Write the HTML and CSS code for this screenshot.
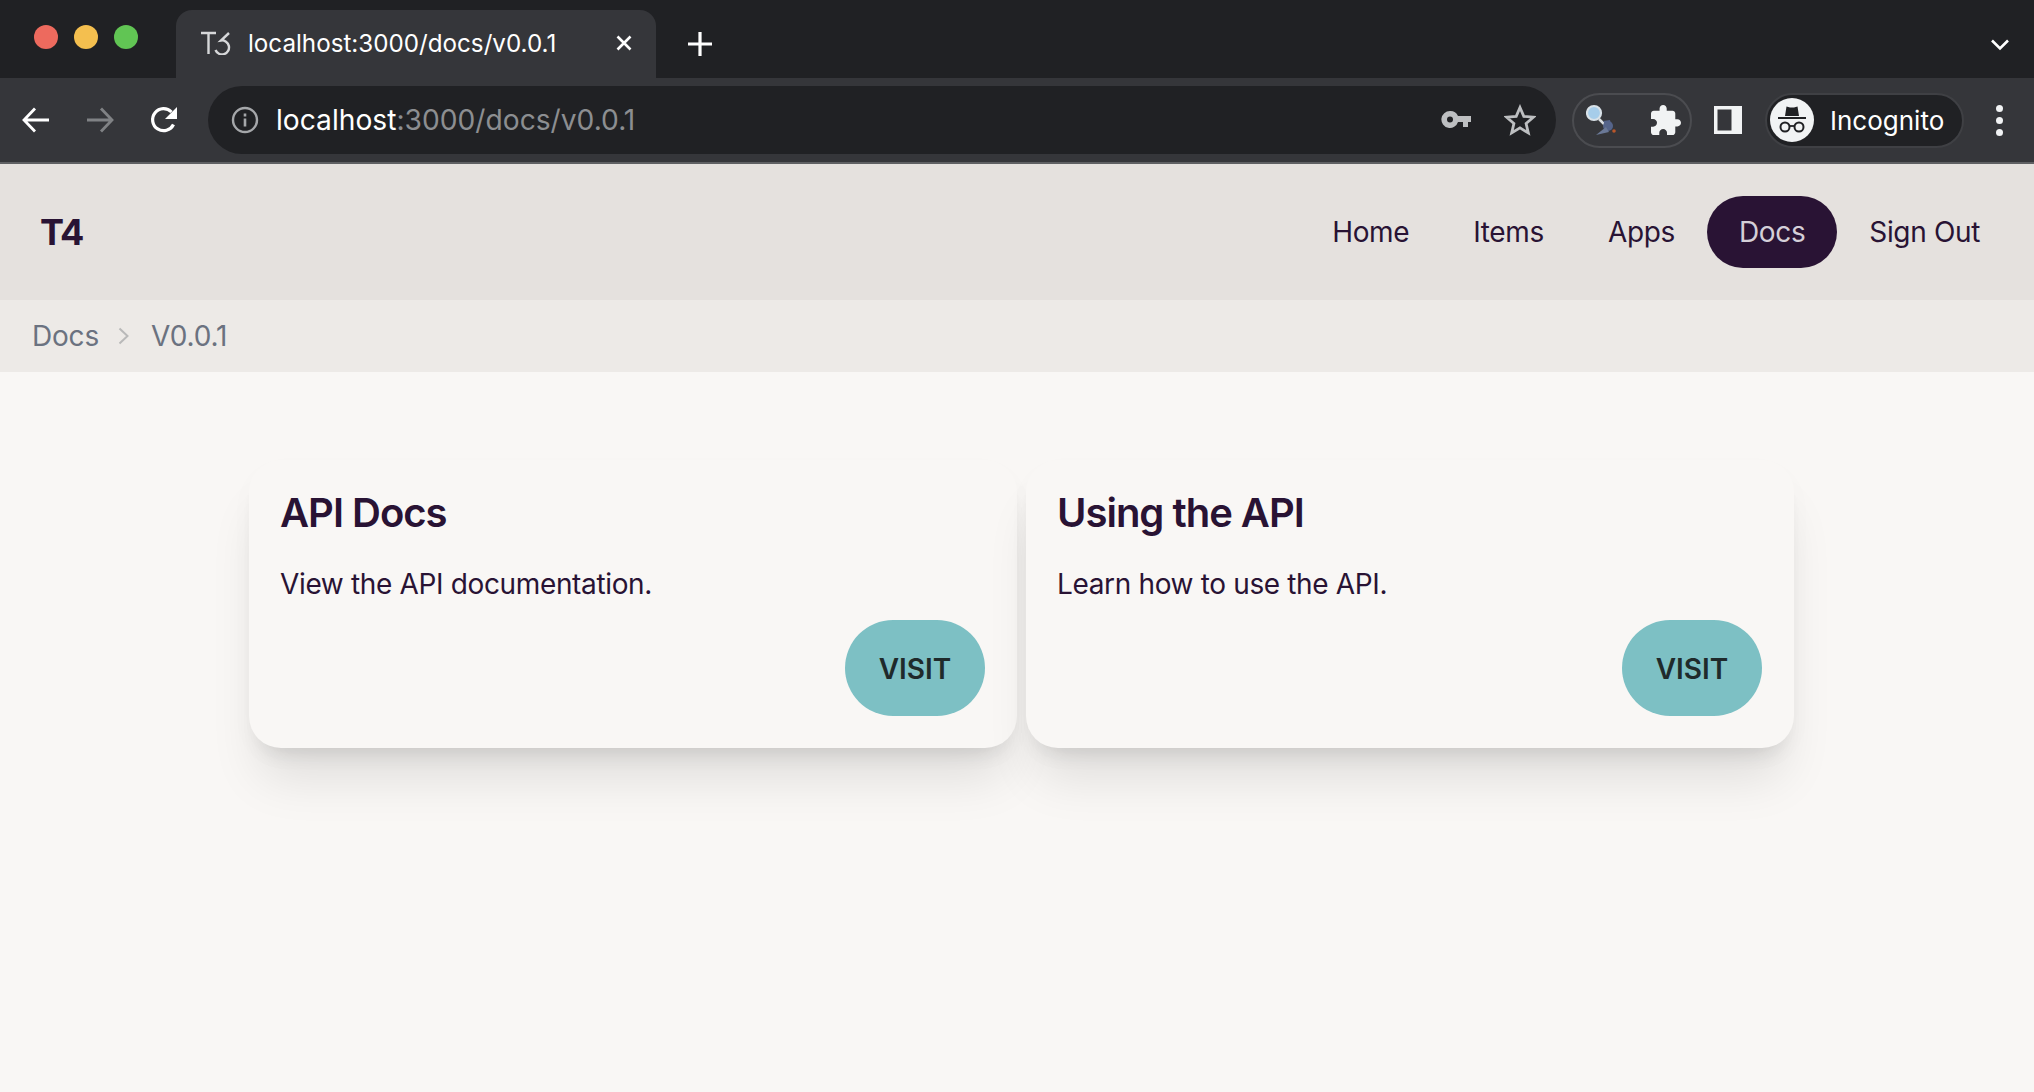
FILE: index.html
```html
<!DOCTYPE html>
<html lang="en">
<head>
    <meta charset="UTF-8">
    <title>localhost:3000/docs/v0.0.1</title>
    <link rel="stylesheet" href="styles.css">
</head>
<body>
    <div class="tabstrip">
        <div class="lights">
            <span class="light red"></span>
            <span class="light yellow"></span>
            <span class="light green"></span>
        </div>
        <div class="tab">
            <svg class="favicon" width="30" height="24" viewBox="0 0 30 24" fill="none" stroke="#d6d7d9" stroke-width="2.4">
                <path d="M0 2h15M7.500 2v21"/>
                <path d="M28 2l-8 7.500A7 7 0 1 1 14.500 19"/>
            </svg>
            <span class="tab-title">localhost:3000/docs/v0.0.1</span>
            <svg class="tab-close" width="16" height="16" viewBox="0 0 16 16" stroke="#fff" stroke-width="2.6">
                <path d="M1.500 1.500l13 13M14.500 1.500l-13 13"/>
            </svg>
        </div>
        <svg class="new-tab" width="26" height="26" viewBox="0 0 26 26" stroke="#fff" stroke-width="3.200">
            <path d="M13 1v24M1 13h24"/>
        </svg>
        <svg class="tab-menu" width="18" height="12" viewBox="0 0 18 12" fill="none" stroke="#fff" stroke-width="2.6">
            <path d="M1 1.500l8 8 8-8"/>
        </svg>
    </div>

    <div class="toolbar">
        <svg class="tool-back" width="28" height="26" viewBox="0 0 28 26" fill="none" stroke="#fff" stroke-width="2.800">
            <path d="M27 13H3M13 1.500L2 13l11 11.500"/>
        </svg>
        <svg class="tool-forward" width="28" height="26" viewBox="0 0 28 26" fill="none" stroke="#808285" stroke-width="2.800">
            <path d="M1 13h24M15 1.500L26 13 15 24.500"/>
        </svg>
        <svg class="tool-reload" width="28" height="28" viewBox="0 0 28 28" fill="none">
            <path d="M23.500 18.500A11 11 0 1 1 21.500 6" stroke="#fff" stroke-width="3.200"/>
            <path d="M27 1v12H15z" fill="#fff"/>
        </svg>
        <div class="omnibox">
            <svg class="info" width="28" height="28" viewBox="0 0 28 28" fill="none">
                <circle cx="14" cy="14" r="12" stroke="#a5a7aa" stroke-width="2.400"/>
                <path d="M14 12.500v8M14 7.500v3" stroke="#a5a7aa" stroke-width="2.600"/>
            </svg>
            <span class="url"><span class="url-host">localhost</span>:3000/docs/v0.0.1</span>
            <svg class="key" width="30" height="20" viewBox="0 0 30 20">
                <path d="M9 1a8.500 8.500 0 0 1 8 5h13v6h-3v5h-5v-5h-5a8.500 8.500 0 1 1-8-11zm0 5.500a3 3 0 1 0 0 6 3 3 0 0 0 0-6z" fill="#bdbfc1" fill-rule="evenodd"/>
            </svg>
            <svg class="star" width="32" height="32" viewBox="0 0 32 32" fill="none" stroke="#bdbfc1" stroke-width="2.800">
                <path d="M16 3.500l3.800 8.900 9.600.8-7.300 6.300 2.200 9.400L16 23.900l-8.300 5 2.200-9.400-7.300-6.300 9.600-.8z"/>
            </svg>
        </div>
        <div class="ext-pill">
            <svg class="ext-icon" width="32" height="36" viewBox="0 0 32 36">
                <path d="M13 17l6 6" stroke="#d9dde0" stroke-width="2.500"/>
                <circle cx="8" cy="11" r="7" fill="#a6cdea" stroke="#d9e2e8" stroke-width="2.200"/>
                <path d="M17 19l7-1 1 5h-5z" fill="#55648a"/>
                <circle cx="22" cy="24" r="5" fill="#55648a"/>
                <path d="M10 33l10-8 3 5z" fill="#6a7896"/>
                <circle cx="28" cy="29" r="1.800" fill="#b9562a"/>
            </svg>
            <svg class="puzzle" width="30" height="30" viewBox="2 1 21 21">
                <path d="M20.500 11H19V7c0-1.100-.9-2-2-2h-4V3.500C13 2.120 11.880 1 10.500 1S8 2.120 8 3.500V5H4c-1.100 0-1.990.9-1.990 2v3.800H3.500c1.490 0 2.700 1.210 2.700 2.700s-1.210 2.700-2.700 2.700H2V20c0 1.100.9 2 2 2h3.800v-1.500c0-1.490 1.210-2.700 2.700-2.700 1.490 0 2.700 1.210 2.700 2.700V22H17c1.100 0 2-.9 2-2v-4h1.500c1.380 0 2.500-1.120 2.500-2.500S21.880 11 20.500 11z" fill="#f1f3f4"/>
            </svg>
        </div>
        <svg class="side-panel" width="28" height="28" viewBox="0 0 28 28">
            <path d="M0 0h28v28H0zM3.500 3.500v21h14v-21z" fill="#f1f3f4" fill-rule="evenodd"/>
        </svg>
        <div class="profile">
            <div class="avatar">
                <svg width="30" height="30" viewBox="0 0 30 30" fill="none">
                    <path d="M8 11L9.500 1.500 13 2.500h4l3.500-1L22 11z" fill="#202124"/>
                    <path d="M1 13h28" stroke="#202124" stroke-width="2"/>
                    <circle cx="8" cy="22" r="4.500" stroke="#202124" stroke-width="2"/>
                    <circle cx="22" cy="22" r="4.500" stroke="#202124" stroke-width="2"/>
                    <path d="M12.500 21h5" stroke="#202124" stroke-width="1.800"/>
                </svg>
            </div>
            <span class="profile-name">Incognito</span>
        </div>
        <div class="dots"><span></span><span></span><span></span></div>
    </div>

    <nav class="navbar">
        <a class="logo">T4</a>
        <div class="nav-links">
            <a class="nav-link">Home</a>
            <a class="nav-link">Items</a>
            <a class="nav-link">Apps</a>
            <a class="nav-link active">Docs</a>
            <a class="nav-link">Sign Out</a>
        </div>
    </nav>

    <div class="breadcrumbs">
        <span>Docs</span>
        <svg class="crumb-sep" width="11" height="18" viewBox="0 0 11 18" fill="none" stroke="#b9b9b9" stroke-width="2">
            <path d="M1.500 1.500L9.500 9l-8 7.500"/>
        </svg>
        <span>V0.0.1</span>
    </div>

    <main class="cards">
        <div class="card">
            <h2>API Docs</h2>
            <p>View the API documentation.</p>
            <div class="card-actions"><button class="btn">VISIT</button></div>
        </div>
        <div class="card">
            <h2>Using the API</h2>
            <p>Learn how to use the API.</p>
            <div class="card-actions"><button class="btn">VISIT</button></div>
        </div>
    </main>
</body>
</html>
```

FILE: styles.css
```css
* {
    box-sizing: border-box;
}
html, body {
    height: 100%;
}
body {
    margin: 0;
    font-family: Inter, "Liberation Sans", sans-serif;
    background-color: #f9f7f5;
    color: #291334;
    overflow: hidden;
}

/* browser window */
.tabstrip {
    height: 78px;
    background-color: #202124;
    display: flex;
    padding-top: 10px;
}
.lights {
    width: 176px;
    display: flex;
    gap: 16px;
    padding: 15px 0 0 34px;
}
.light {
    width: 24px;
    height: 24px;
    border-radius: 50%;
}
.red { background-color: #ed6a5e; }
.yellow { background-color: #f4bf4f; }
.green { background-color: #61c554; }
.tab {
    width: 480px;
    height: 68px;
    background-color: #35363a;
    border-radius: 16px 16px 0 0;
    display: flex;
    align-items: center;
    padding: 0 24px 2px 25px;
}
.tab-title {
    margin-left: 17px;
    font-size: 24.2px;
    color: #fff;
    flex: 1;
    white-space: nowrap;
}
.new-tab {
    margin: 21px 0 0 31px;
}
.tab-menu {
    margin: 29px 25px 0 auto;
}
.toolbar {
    height: 86px;
    background-color: #35363a;
    border-bottom: 2px solid #5f6063;
    display: flex;
    align-items: center;
    padding: 0 0 0 22px;
}
.tool-forward {
    margin-left: 36px;
}
.tool-reload {
    margin-left: 36px;
}
.omnibox {
    width: 1348px;
    height: 68px;
    margin-left: 30px;
    background-color: #202124;
    border-radius: 34px;
    display: flex;
    align-items: center;
    padding: 0 20px 0 23px;
}
.url {
    margin-left: 17px;
    font-size: 28.2px;
    color: #8c8e91;
    flex: 1;
    white-space: nowrap;
}
.url-host {
    color: #fff;
}
.star {
    margin-left: 33px;
}
.ext-pill {
    width: 120px;
    height: 55px;
    margin-left: 16px;
    border: 2px solid #4b4c50;
    border-radius: 28px;
    display: flex;
    align-items: center;
    justify-content: space-between;
    padding: 0 9px 0 12px;
}
.side-panel {
    margin-left: 22px;
}
.profile {
    width: 199px;
    height: 55px;
    margin-left: 23px;
    background-color: #202124;
    border: 2px solid #3f4044;
    border-radius: 28px;
    display: flex;
    align-items: center;
    padding-left: 3px;
}
.avatar {
    width: 44px;
    height: 44px;
    border-radius: 50%;
    background-color: #f1f3f4;
    display: flex;
    align-items: center;
    justify-content: center;
}
.profile-name {
    margin-left: 16px;
    font-size: 26px;
    color: #fff;
}
.dots {
    margin-left: 32px;
    display: flex;
    flex-direction: column;
    gap: 5px;
}
.dots span {
    width: 7px;
    height: 7px;
    border-radius: 50%;
    background-color: #f1f3f4;
}

/* page */
.navbar {
    height: 136px;
    background-color: #e5e1de;
    display: flex;
    align-items: center;
    justify-content: space-between;
    padding: 0 22px 0 40px;
}
.logo {
    font-size: 36px;
    font-weight: 700;
    letter-spacing: -1.5px;
}
.nav-links {
    display: flex;
}
.nav-link {
    height: 72px;
    padding: 0 32px;
    border-radius: 36px;
    font-size: 28px;
    letter-spacing: -0.35px;
    display: flex;
    align-items: center;
}
.nav-link.active {
    background-color: #291334;
    color: #d4cfd8;
}
.breadcrumbs {
    height: 72px;
    background-color: #edeae7;
    display: flex;
    align-items: center;
    gap: 19px;
    padding-left: 32px;
    font-size: 28px;
    letter-spacing: -0.2px;
    color: #6b7280;
}
.crumb-sep {
    margin-right: 3px;
}
.cards {
    display: grid;
    grid-template-columns: 768px 768px;
    gap: 9px;
    padding: 88px 0 0 249px;
}
.card {
    height: 288px;
    padding: 32px 32px 32px 31px;
    border-radius: 32px;
    background-color: #f9f7f5;
    box-shadow: 0 40px 50px -10px rgba(0, 0, 0, 0.1), 0 16px 20px -12px rgba(0, 0, 0, 0.1), 0 10px 30px rgba(0, 0, 0, 0.02);
    display: flex;
    flex-direction: column;
}
.card h2 {
    margin: 0;
    font-size: 40px;
    font-weight: 600;
    line-height: 42px;
    letter-spacing: -1px;
}
.card p {
    margin: 30px 0 0;
    font-size: 28px;
    line-height: 40px;
    letter-spacing: -0.35px;
}
.card-actions {
    margin-top: auto;
    display: flex;
    justify-content: flex-end;
}
.btn {
    width: 140px;
    height: 96px;
    border: none;
    border-radius: 48px;
    background-color: #7dc0c4;
    color: #1f2a2b;
    font-family: inherit;
    font-size: 28px;
    font-weight: 600;
    padding-top: 2px;
}
```
